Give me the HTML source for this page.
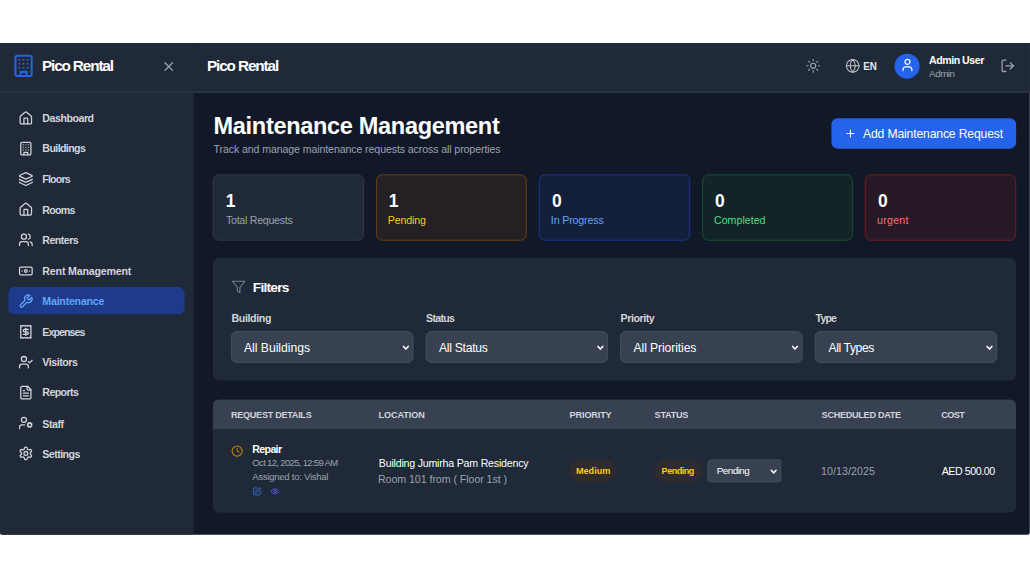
<!DOCTYPE html>
<html lang="en">
<head>
<meta charset="utf-8">
<title>Pico Rental - Maintenance Management</title>
<style>
*{box-sizing:border-box;margin:0;padding:0}
html,body{width:1030px;height:579px;overflow:hidden;background:#fff}
body{font-family:"Liberation Sans",sans-serif;color:#fff;position:relative}
svg.i{fill:none;stroke:currentColor;stroke-width:2;stroke-linecap:round;stroke-linejoin:round;display:block;flex:none}
#app{position:absolute;left:0;top:43.3px;width:1355.3px;height:647.2px;transform:scale(.76);transform-origin:0 0;background:#111827;overflow:hidden;border-bottom-left-radius:3px;border-bottom-right-radius:3px}
#hb{position:absolute;left:0;top:0;width:100%;height:65px;background:#1f2937;border-bottom:1px solid #374151}
/* sidebar */
#side{position:absolute;left:0;top:0;width:255px;height:100%;background:#1f2937}
#side .hd{height:65px;border-bottom:1px solid #374151;display:flex;align-items:center;padding:0 16px 4px 15px;position:relative}
#bs{position:relative;top:.4px}
#side .hd .logo{width:32px;height:32px;color:#2563eb}
.brand{font-size:20.2px;font-weight:700;letter-spacing:-1.3px;margin-left:8px;color:#fff;white-space:nowrap}
#side .hd .x{position:absolute;left:211.6px;top:21px;width:20px;height:20px;color:#9ca3af;stroke-width:2}
nav{position:absolute;left:11px;top:80.2px;width:232px}
nav a span{position:relative;top:1px}
nav a{display:flex;align-items:center;height:36px;margin-bottom:4.15px;padding:0 12px 0 13px;border-radius:8px;color:#d1d5db;font-size:14px;font-weight:700;letter-spacing:-.65px;text-decoration:none;white-space:nowrap}
nav a svg{width:20px;height:20px;margin-right:12px;stroke-width:1.9;position:relative;top:.7px}
nav a.on{background:#1e3a8a;color:#60a5fa}
/* top bar */
#top{position:absolute;left:255px;top:0;right:0;height:65px;background:#1f2937;border-bottom:1px solid #374151}
#top .brand{position:absolute;left:17px;top:18.4px;margin:0;line-height:24px}
#top .sun{position:absolute;top:20px;width:20px;height:20px;color:#9ca3af;left:805.3px;stroke-width:1.8}
#top .globe{position:absolute;left:857px;top:20px;width:20px;height:20px;color:#c3c8d0;stroke-width:1.6}
#top .en{position:absolute;left:881px;top:20px;line-height:20px;font-size:15px;font-weight:700;color:#e5e7eb;transform:scaleX(.86);transform-origin:0 50%}
#top .av{position:absolute;left:922px;top:14px;width:33px;height:33px;border-radius:50%;background:#2563eb;display:flex;align-items:center;justify-content:center}
#top .av svg{width:20px;height:20px;color:#fff;stroke-width:1.9;position:relative;top:-1.5px}
#top .un{position:absolute;left:966px;top:12px;line-height:20px;font-size:14px;font-weight:700;color:#fff;letter-spacing:-.45px;white-space:nowrap}
#top .ur{position:absolute;left:966px;top:33px;line-height:16px;font-size:13px;color:#9ca3af;white-space:nowrap}
#top .out{position:absolute;left:1061.3px;top:20px;width:20px;height:20px;color:#9ca3af}
/* main */
#main{position:absolute;left:256px;top:65px;right:0;bottom:0}
h1{position:absolute;left:25px;top:27px;font-size:31px;line-height:36px;font-weight:700;letter-spacing:-.35px;white-space:nowrap;color:#fff}
.sub{position:absolute;left:25px;top:65.4px;font-size:14px;line-height:20px;color:#9ca3af;white-space:nowrap;letter-spacing:-.62px}
.add{position:absolute;left:838px;top:34px;width:243px;height:40px;border-radius:8px;background:#2563eb;color:#fff;font-size:16px;display:flex;align-items:center;padding-left:17px;white-space:nowrap;letter-spacing:-.35px}
.add svg{width:16px;height:16px;margin-right:9px}
.stat{position:absolute;top:108px;width:198.6px;height:87px;border-radius:8px;border:1px solid #374151;background:#1f2937;padding:16px 0 0 17px}
.stat b{display:block;font-size:23px;line-height:32px;position:relative;top:2px;left:-1px;font-weight:700;color:#fff}
.stat span{display:inline-block;vertical-align:top;position:relative;top:.8px;font-size:14px;line-height:20px;letter-spacing:-.5px;color:#9ca3af}
.card{position:absolute;left:24px;width:1057px;background:#1f2937;border-radius:8px}
#fil{top:218px;height:161px}
#fil h3{position:absolute;left:24px;top:24px;font-size:18px;line-height:28px;font-weight:700;display:flex;align-items:center;letter-spacing:-.5px}
#fil h3 svg{width:20px;height:20px;margin-right:8px;color:#7b8494;stroke-width:1.6}
.f{position:absolute;top:68px;width:240px}
.f label{display:block;font-size:14px;line-height:20px;font-weight:700;color:#d1d5db;letter-spacing:-.6px;margin-bottom:8px;position:relative;top:1px}
.sel{position:relative;height:42px;border:1px solid #4b5563;background:#374151;border-radius:8px;font-size:16px;line-height:42.6px;padding-left:16px;color:#fff;letter-spacing:-.4px;white-space:nowrap}
.sel svg{position:absolute;right:4px;top:16.5px;width:10px;height:8px;stroke-width:2.3}
#tbl{top:404px;height:149px;overflow:hidden}
#tbl .th{position:absolute;left:0;top:0;width:100%;height:39px;background:#374151}
#tbl .th span{position:absolute;top:12px;font-size:12px;line-height:16px;font-weight:700;color:#d1d5db;letter-spacing:.35px;white-space:nowrap}
#tbl .t{position:absolute;white-space:nowrap}
.pill{position:absolute;top:80px;height:28px;border-radius:14px;background:#2f2b2e;color:#facc15;font-size:12px;font-weight:700;line-height:28px;text-align:center;letter-spacing:-.3px}
/*FIT*/
#app #bs{letter-spacing:-1.514px;margin-left:8.20px}
#app #bt{letter-spacing:-1.487px;margin-left:0.27px}
#app #n0{letter-spacing:-0.628px;margin-left:-0.30px}
#app #n1{letter-spacing:-0.809px;margin-left:-0.30px}
#app #n2{letter-spacing:-1.106px;margin-left:-0.30px}
#app #n3{letter-spacing:-0.946px;margin-left:-0.30px}
#app #n4{letter-spacing:-0.707px;margin-left:-0.30px}
#app #n5{letter-spacing:-0.244px;margin-left:-0.30px}
#app #n6{letter-spacing:-0.309px;margin-left:-0.30px}
#app #n7{letter-spacing:-1.244px;margin-left:-0.30px}
#app #n8{letter-spacing:-0.620px;margin-left:-0.30px}
#app #n9{letter-spacing:-0.802px;margin-left:-0.30px}
#app #n10{letter-spacing:-0.628px;margin-left:-0.30px}
#app #n11{letter-spacing:-0.735px;margin-left:-0.30px}
#app #en{letter-spacing:-0.300px;margin-left:-0.50px}
#app #un{letter-spacing:-0.663px;margin-left:1.49px}
#app #ur{letter-spacing:-0.677px;margin-left:1.49px}
#app #h1{letter-spacing:-0.443px;margin-left:0.00px}
#app #sub{letter-spacing:-0.160px;margin-left:-0.10px}
#app #add{letter-spacing:-0.189px;margin-left:-0.51px}
#app #ft{letter-spacing:-0.955px;margin-left:0.59px}
#app #fl0{letter-spacing:-0.476px;margin-left:0.51px}
#app #fl1{letter-spacing:-0.928px;margin-left:0.59px}
#app #fl2{letter-spacing:-0.600px;margin-left:0.59px}
#app #fl3{letter-spacing:-1.192px;margin-left:1.18px}
#app #fs0{letter-spacing:-0.029px;margin-left:0.10px}
#app #fs1{letter-spacing:-0.355px;margin-left:0.51px}
#app #fs2{letter-spacing:-0.127px;margin-left:0.59px}
#app #fs3{letter-spacing:-0.548px;margin-left:1.18px}
#app #th0{letter-spacing:-0.395px;margin-left:-0.10px}
#app #th1{letter-spacing:-0.090px;margin-left:-0.10px}
#app #th2{letter-spacing:-0.187px;margin-left:0.51px}
#app #th3{letter-spacing:-0.362px;margin-left:0.30px}
#app #th4{letter-spacing:-0.394px;margin-left:1.09px}
#app #th5{letter-spacing:-0.756px;margin-left:-0.51px}
#app #rp{letter-spacing:-0.896px;margin-left:0.00px}
#app #dt{letter-spacing:-0.874px;margin-left:0.00px}
#app #as{letter-spacing:-0.329px;margin-left:0.00px}
#app #l1{letter-spacing:-0.292px;margin-left:0.51px}
#app #l2{letter-spacing:-0.080px;margin-left:-0.67px}
#app #p0{letter-spacing:-0.013px;margin-left:0.89px}
#app #p1{letter-spacing:-0.694px;margin-left:-0.51px}
#app #st{letter-spacing:-0.719px;margin-left:-0.88px}
#app #sd{letter-spacing:0.101px;margin-left:0.20px}
#app #co{letter-spacing:-0.556px;margin-left:0.00px}
#app #s0{letter-spacing:-0.368px;margin-left:-0.64px}
#app #s1{letter-spacing:-0.204px;margin-left:-2.37px}
#app #s2{letter-spacing:-0.204px;margin-left:-2.37px}
#app #s3{letter-spacing:0.018px;margin-left:-2.37px}
#app #s4{letter-spacing:0.328px;margin-left:-2.37px}
/*ENDFIT*/
#ss svg{top:11px;right:4px}
</style>
</head>
<body>
<div id="app">
  <div id="hb"></div>
  <div id="side">
    <div class="hd">
      <svg class="i logo" viewBox="0 0 24 24"><rect width="16" height="20" x="4" y="2" rx="2" ry="2"/><path d="M9 22v-4h6v4"/><path d="M8 6h.01"/><path d="M16 6h.01"/><path d="M12 6h.01"/><path d="M12 10h.01"/><path d="M12 14h.01"/><path d="M16 10h.01"/><path d="M16 14h.01"/><path d="M8 10h.01"/><path d="M8 14h.01"/></svg>
      <span class="brand" id="bs">Pico Rental</span>
      <svg class="i x" viewBox="0 0 24 24"><path d="M18 6 6 18"/><path d="m6 6 12 12"/></svg>
    </div>
    <nav>
      <a><svg class="i" viewBox="0 0 24 24"><path d="M15 21v-8a1 1 0 0 0-1-1h-4a1 1 0 0 0-1 1v8"/><path d="M3 10a2 2 0 0 1 .709-1.528l7-5.999a2 2 0 0 1 2.582 0l7 5.999A2 2 0 0 1 21 10v9a2 2 0 0 1-2 2H5a2 2 0 0 1-2-2z"/></svg><span id="n0">Dashboard</span></a>
      <a><svg class="i" viewBox="0 0 24 24"><rect width="16" height="20" x="4" y="2" rx="2" ry="2"/><path d="M9 22v-4h6v4"/><path d="M8 6h.01"/><path d="M16 6h.01"/><path d="M12 6h.01"/><path d="M12 10h.01"/><path d="M12 14h.01"/><path d="M16 10h.01"/><path d="M16 14h.01"/><path d="M8 10h.01"/><path d="M8 14h.01"/></svg><span id="n1">Buildings</span></a>
      <a><svg class="i" viewBox="0 0 24 24"><path d="M12.83 2.18a2 2 0 0 0-1.66 0L2.6 6.08a1 1 0 0 0 0 1.83l8.58 3.91a2 2 0 0 0 1.66 0l8.58-3.9a1 1 0 0 0 0-1.83z"/><path d="M2 12a1 1 0 0 0 .58.91l8.6 3.91a2 2 0 0 0 1.65 0l8.58-3.9A1 1 0 0 0 22 12"/><path d="M2 17a1 1 0 0 0 .58.91l8.6 3.91a2 2 0 0 0 1.65 0l8.58-3.9A1 1 0 0 0 22 17"/></svg><span id="n2">Floors</span></a>
      <a><svg class="i" viewBox="0 0 24 24"><path d="M15 21v-8a1 1 0 0 0-1-1h-4a1 1 0 0 0-1 1v8"/><path d="M3 10a2 2 0 0 1 .709-1.528l7-5.999a2 2 0 0 1 2.582 0l7 5.999A2 2 0 0 1 21 10v9a2 2 0 0 1-2 2H5a2 2 0 0 1-2-2z"/></svg><span id="n3">Rooms</span></a>
      <a><svg class="i" viewBox="0 0 24 24"><path d="M16 21v-2a4 4 0 0 0-4-4H6a4 4 0 0 0-4 4v2"/><circle cx="9" cy="7" r="4"/><path d="M22 21v-2a4 4 0 0 0-3-3.87"/><path d="M16 3.13a4 4 0 0 1 0 7.75"/></svg><span id="n4">Renters</span></a>
      <a><svg class="i" viewBox="0 0 24 24"><rect width="20" height="12" x="2" y="6" rx="2"/><circle cx="12" cy="12" r="2"/><path d="M6 12h.01M18 12h.01"/></svg><span id="n5">Rent Management</span></a>
      <a class="on"><svg class="i" viewBox="0 0 24 24"><path d="M14.7 6.3a1 1 0 0 0 0 1.4l1.6 1.6a1 1 0 0 0 1.4 0l3.77-3.77a6 6 0 0 1-7.94 7.94l-6.91 6.91a2.12 2.12 0 0 1-3-3l6.91-6.91a6 6 0 0 1 7.94-7.94l-3.76 3.76z"/></svg><span id="n6">Maintenance</span></a>
      <a><svg class="i" viewBox="0 0 24 24"><path d="M4 2v20l2-1 2 1 2-1 2 1 2-1 2 1 2-1 2 1V2l-2 1-2-1-2 1-2-1-2 1-2-1-2 1Z"/><path d="M16 8h-6a2 2 0 1 0 0 4h4a2 2 0 1 1 0 4H8"/><path d="M12 17.5v-11"/></svg><span id="n7">Expenses</span></a>
      <a><svg class="i" viewBox="0 0 24 24"><path d="M16 21v-2a4 4 0 0 0-4-4H6a4 4 0 0 0-4 4v2"/><circle cx="9" cy="7" r="4"/><polyline points="16 11 18 13 22 9"/></svg><span id="n8">Visitors</span></a>
      <a><svg class="i" viewBox="0 0 24 24"><path d="M15 2H6a2 2 0 0 0-2 2v16a2 2 0 0 0 2 2h12a2 2 0 0 0 2-2V7Z"/><path d="M14 2v4a2 2 0 0 0 2 2h4"/><path d="M10 9H8"/><path d="M16 13H8"/><path d="M16 17H8"/></svg><span id="n9">Reports</span></a>
      <a><svg class="i" viewBox="0 0 24 24"><circle cx="18" cy="15" r="3"/><circle cx="9" cy="7" r="4"/><path d="M10 15H6a4 4 0 0 0-4 4v2"/><path d="m21.7 16.4-.9-.3"/><path d="m15.2 13.9-.9-.3"/><path d="m16.6 18.7.3-.9"/><path d="m19.1 12.2.3-.9"/><path d="m19.6 18.7-.4-1"/><path d="m16.8 12.3-.4-1"/><path d="m14.3 16.6 1-.4"/><path d="m20.7 13.8 1-.4"/></svg><span id="n10">Staff</span></a>
      <a><svg class="i" viewBox="0 0 24 24"><path d="M12.22 2h-.44a2 2 0 0 0-2 2v.18a2 2 0 0 1-1 1.73l-.43.25a2 2 0 0 1-2 0l-.15-.08a2 2 0 0 0-2.73.73l-.22.38a2 2 0 0 0 .73 2.73l.15.1a2 2 0 0 1 1 1.72v.51a2 2 0 0 1-1 1.74l-.15.09a2 2 0 0 0-.73 2.73l.22.38a2 2 0 0 0 2.73.73l.15-.08a2 2 0 0 1 2 0l.43.25a2 2 0 0 1 1 1.73V20a2 2 0 0 0 2 2h.44a2 2 0 0 0 2-2v-.18a2 2 0 0 1 1-1.73l.43-.25a2 2 0 0 1 2 0l.15.08a2 2 0 0 0 2.73-.73l.22-.39a2 2 0 0 0-.73-2.73l-.15-.08a2 2 0 0 1-1-1.74v-.5a2 2 0 0 1 1-1.74l.15-.09a2 2 0 0 0 .73-2.73l-.22-.38a2 2 0 0 0-2.73-.73l-.15.08a2 2 0 0 1-2 0l-.43-.25a2 2 0 0 1-1-1.73V4a2 2 0 0 0-2-2z"/><circle cx="12" cy="12" r="3"/></svg><span id="n11">Settings</span></a>
    </nav>
  </div>
  <div id="top">
    <span class="brand" id="bt">Pico Rental</span>
    <svg class="i sun" viewBox="0 0 24 24"><circle cx="12" cy="12" r="4"/><path d="M12 2v2"/><path d="M12 20v2"/><path d="m4.93 4.93 1.41 1.41"/><path d="m17.66 17.66 1.41 1.41"/><path d="M2 12h2"/><path d="M20 12h2"/><path d="m6.34 17.66-1.41 1.41"/><path d="m19.07 4.93-1.41 1.41"/></svg>
    <svg class="i globe" viewBox="0 0 24 24"><circle cx="12" cy="12" r="10"/><path d="M12 2a14.5 14.5 0 0 0 0 20 14.5 14.5 0 0 0 0-20"/><path d="M2 12h20"/></svg>
    <span class="en" id="en">EN</span>
    <div class="av"><svg class="i" viewBox="0 0 24 24"><path d="M19 21v-2a4 4 0 0 0-4-4H9a4 4 0 0 0-4 4v2"/><circle cx="12" cy="7" r="4"/></svg></div>
    <span class="un" id="un">Admin User</span>
    <span class="ur" id="ur">Admin</span>
    <svg class="i out" viewBox="0 0 24 24"><path d="M9 21H5a2 2 0 0 1-2-2V5a2 2 0 0 1 2-2h4"/><polyline points="16 17 21 12 16 7"/><line x1="21" x2="9" y1="12" y2="12"/></svg>
  </div>
  <div id="main">
    <h1 id="h1">Maintenance Management</h1>
    <p class="sub" id="sub">Track and manage maintenance requests across all properties</p>
    <div class="add"><svg class="i" viewBox="0 0 24 24"><path d="M5 12h14"/><path d="M12 5v14"/></svg><span id="add" style="position:relative;top:1px">Add Maintenance Request</span></div>

    <div class="stat" style="left:24px"><b>1</b><span id="s0">Total Requests</span></div>
    <div class="stat" style="left:238.6px;background:#242023;border-color:#854d0e"><b>1</b><span id="s1" style="color:#facc15">Pending</span></div>
    <div class="stat" style="left:453.2px;background:#141f3b;border-color:#1e40af"><b>0</b><span id="s2" style="color:#60a5fa">In Progress</span></div>
    <div class="stat" style="left:667.8px;background:#122428;border-color:#166534"><b>0</b><span id="s3" style="color:#4ade80">Completed</span></div>
    <div class="stat" style="left:882.4px;background:#271925;border-color:#991b1b"><b>0</b><span id="s4" style="color:#f87171">urgent</span></div>
    <div class="card" id="fil">
      <h3><svg class="i" viewBox="0 0 24 24"><polygon points="22 3 2 3 10 12.46 10 19 14 21 14 12.46 22 3"/></svg><span id="ft">Filters</span></h3>
      <div class="f" style="left:24px"><label><span id="fl0">Building</span></label><div class="sel"><span id="fs0">All Buildings</span> <svg class="i" viewBox="0 0 11 9"><path d="M2 2.5 5.5 6.5 9 2.5"/></svg></div></div>
      <div class="f" style="left:280px"><label><span id="fl1">Status</span></label><div class="sel"><span id="fs1">All Status</span> <svg class="i" viewBox="0 0 11 9"><path d="M2 2.5 5.5 6.5 9 2.5"/></svg></div></div>
      <div class="f" style="left:536px"><label><span id="fl2">Priority</span></label><div class="sel"><span id="fs2">All Priorities</span> <svg class="i" viewBox="0 0 11 9"><path d="M2 2.5 5.5 6.5 9 2.5"/></svg></div></div>
      <div class="f" style="left:792px"><label><span id="fl3">Type</span></label><div class="sel"><span id="fs3">All Types</span> <svg class="i" viewBox="0 0 11 9"><path d="M2 2.5 5.5 6.5 9 2.5"/></svg></div></div>
    </div>
    <div class="card" id="tbl">
      <div class="th">
        <span id="th0" style="left:24px">REQUEST DETAILS</span>
        <span id="th1" style="left:218px">LOCATION</span>
        <span id="th2" style="left:469px">PRIORITY</span>
        <span id="th3" style="left:581px">STATUS</span>
        <span id="th4" style="left:800px">SCHEDULED DATE</span>
        <span id="th5" style="left:959px">COST</span>
      </div>
      <svg class="i t" id="clk" viewBox="0 0 24 24" style="left:24px;top:60.3px;width:16px;height:16px;color:#ca8a04"><circle cx="12" cy="12" r="10"/><polyline points="12 6 12 12 16 14"/></svg>
      <div class="t" id="rp" style="left:52px;top:56px;font-size:14px;line-height:20px;font-weight:700">Repair</div>
      <div class="t" id="dt" style="left:52px;top:76.3px;font-size:12.5px;line-height:16px;color:#9ca3af">Oct 12, 2025, 12:59 AM</div>
      <div class="t" id="as" style="left:52px;top:93.6px;font-size:12.5px;line-height:16px;color:#9ca3af">Assigned to: Vishal</div>
      <svg class="i t" viewBox="0 0 24 24" style="left:52px;top:114.5px;width:12px;height:12px;color:#3b82f6"><path d="M12 3H5a2 2 0 0 0-2 2v14a2 2 0 0 0 2 2h14a2 2 0 0 0 2-2v-7"/><path d="M18.375 2.625a1 1 0 0 1 3 3l-9.013 9.014a2 2 0 0 1-.853.505l-2.873.84a.5.5 0 0 1-.62-.62l.84-2.873a2 2 0 0 1 .506-.852z"/></svg>
      <svg class="i t" viewBox="0 0 24 24" style="left:76px;top:114.5px;width:12px;height:12px;color:#6366f1"><path d="M2.062 12.348a1 1 0 0 1 0-.696 10.75 10.75 0 0 1 19.876 0 1 1 0 0 1 0 .696 10.75 10.75 0 0 1-19.876 0"/><circle cx="12" cy="12" r="3"/></svg>
      <div class="t" id="l1" style="left:218px;top:74px;font-size:14px;line-height:20px;color:#fff">Building Jumirha Pam Residency</div>
      <div class="t" id="l2" style="left:218px;top:94.9px;font-size:14px;line-height:20px;color:#9ca3af">Room 101 from ( Floor 1st )</div>
      <div class="pill" style="left:469px;width:62px"><span id="p0">Medium</span></div>
      <div class="pill" style="left:581px;width:62px"><span id="p1">Pending</span></div>
      <div class="sel t" id="ss" style="left:651px;top:79px;width:97px;height:30px;line-height:28px;border-radius:4px;font-size:13px;padding-left:12px"><span id="st">Pending</span> <svg class="i" viewBox="0 0 11 9"><path d="M2 2.5 5.5 6.5 9 2.5"/></svg></div>
      <div class="t" id="sd" style="left:800px;top:84px;font-size:14px;line-height:20px;color:#9ca3af">10/13/2025</div>
      <div class="t" id="co" style="left:959px;top:84px;font-size:14px;line-height:20px;color:#fff">AED 500.00</div>
    </div>
  </div>
</div>
</body>
</html>
